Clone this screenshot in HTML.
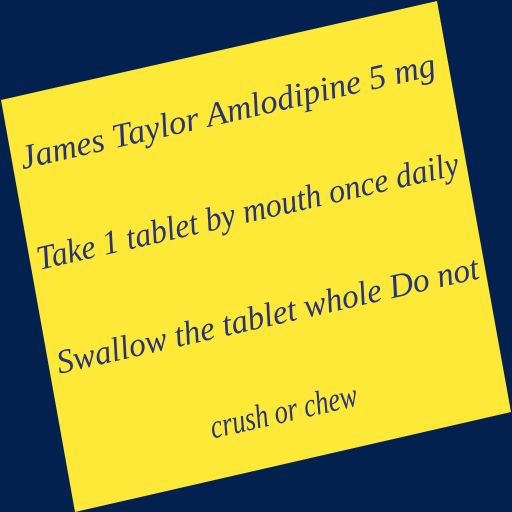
<!DOCTYPE html>
<html><head><style>html,body{margin:0;padding:0;background:#03214f;width:512px;height:512px;overflow:hidden}
text{font-family:"Liberation Serif","DejaVu Serif",serif;font-style:italic}</style></head>
<body>
<svg width="512" height="512" viewBox="0 0 512 512" xmlns="http://www.w3.org/2000/svg">
<rect width="512" height="512" fill="#03214f"/>
<polygon points="1,100 437,1 511,412 75,512" fill="#fee838"/>
<g fill="#26337a" text-anchor="middle" font-size="34">
<text x="0" y="0" transform="translate(230,122) rotate(-12.8)" textLength="425" lengthAdjust="spacingAndGlyphs">James Taylor Amlodipine 5 mg</text>
<text x="0" y="0" transform="translate(250,222) rotate(-12.8)" textLength="432" lengthAdjust="spacingAndGlyphs">Take 1 tablet by mouth once daily</text>
<text x="0" y="0" transform="translate(270,326) rotate(-12.8)" textLength="432" lengthAdjust="spacingAndGlyphs">Swallow the tablet whole Do not</text>
<text x="0" y="0" transform="translate(286,422) rotate(-12.8)" textLength="150" lengthAdjust="spacingAndGlyphs">crush or chew</text>
</g>
</svg>
</body></html>
